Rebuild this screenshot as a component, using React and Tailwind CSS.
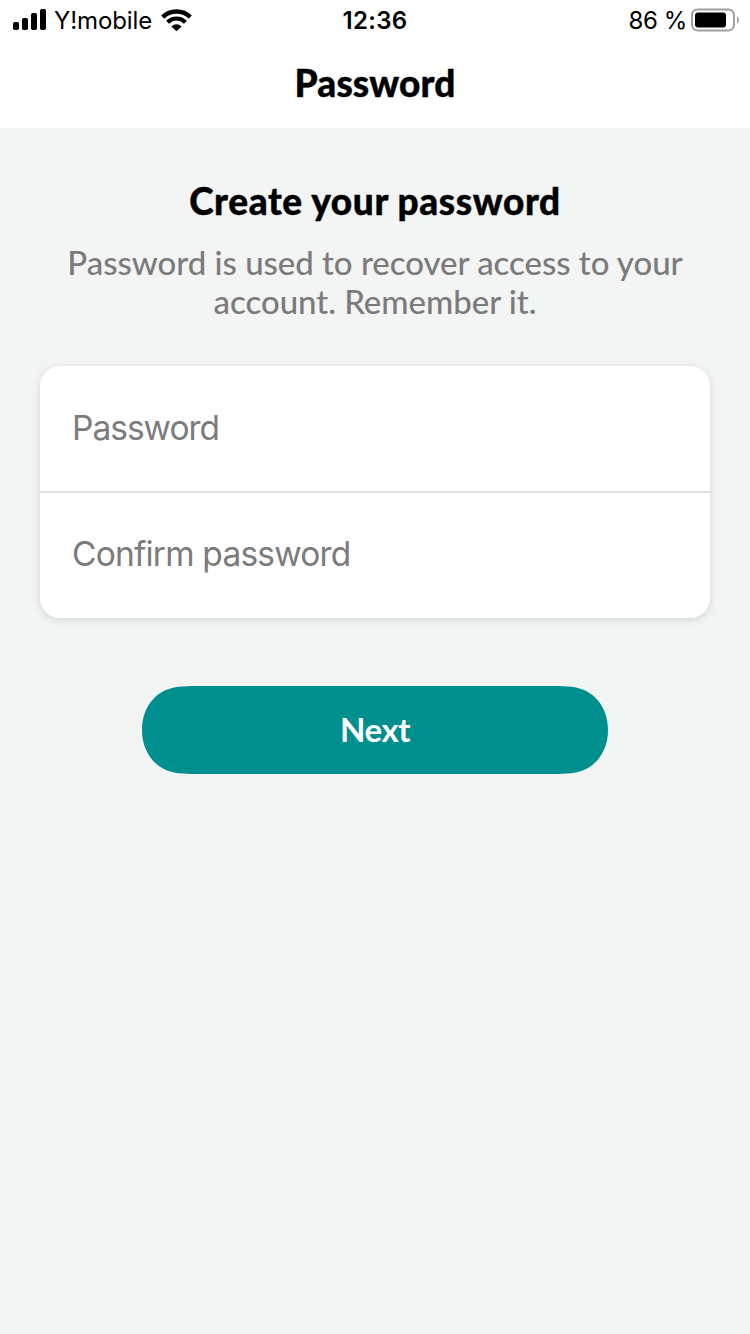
function StatusBar() {
  return (
    <div className="relative flex h-10 items-center justify-between pl-[13px] pr-[11px] font-['Inter',sans-serif] text-black">
      <div className="flex items-center">
        <svg className="block h-[22px] w-[34px]" viewBox="0 0 34 22" fill="#000">
          <rect x="0" y="13" width="6" height="8" rx="1.8" />
          <rect x="9" y="9" width="6" height="12" rx="1.8" />
          <rect x="18" y="4" width="6" height="17" rx="1.8" />
          <rect x="27" y="0" width="6" height="21" rx="1.8" />
        </svg>
        <span className="ml-[7px] w-[99px] whitespace-nowrap pt-[2px] text-[24px] leading-[40px] tracking-[-0.1px]">Y!mobile</span>
        <svg className="ml-[8px] block h-[23px] w-[31px]" viewBox="0 0 31 23" fill="none" stroke="#000">
          <path d="M1.7 8.1 A19.8 19.8 0 0 1 29.3 8.1" strokeWidth="4.4" />
          <path d="M6.600 13.2 A12.6 12.600 0 0 1 24.4 13.2" strokeWidth="4.2" />
          <path d="M10.400 17.4 A7.2 7.2 0 0 1 20.600 17.4 L15.5 22.300 Z" fill="#000" stroke="none" />
        </svg>
      </div>
      <span className="absolute inset-x-0 pt-[2px] text-center text-[24px] font-semibold leading-[40px] tracking-[0.3px]">12:36</span>
      <div className="flex items-center">
        <span className="whitespace-nowrap pt-[2px] text-[24px] leading-[40px] tracking-[-0.4px]">86 %</span>
        <svg className="ml-[4px] block h-[24px] w-[48px]" viewBox="0 0 48 24">
          <rect x="1" y="1.5" width="42" height="21" rx="5.5" fill="none" stroke="#a0a0a0" strokeWidth="2" />
          <rect x="4" y="4.5" width="31" height="15" rx="3" fill="#000" />
          <path d="M46 8 Q48 9.5 48 12 Q48 14.500 46 16 Z" fill="#a0a0a0" />
        </svg>
      </div>
    </div>
  );
}

export default function App() {
  return (
    <div className="min-h-[1334px] w-[750px] bg-[#f3f5f4] font-['Lato',sans-serif]">
      <header className="h-32 bg-white">
        <StatusBar />
        <h1 className="pt-[20px] text-center text-[37px] font-black leading-[46px] tracking-[0.1px] text-black [-webkit-text-stroke:0.4px_#000]">Password</h1>
      </header>
      <main className="flex flex-col items-center pt-[49px]">
        <h2 className="whitespace-nowrap text-[37px] font-black leading-[48px] tracking-[0.6px] text-black [-webkit-text-stroke:0.4px_#000]">Create your password</h2>
        <p className="mt-[18px] whitespace-nowrap text-center text-[33px] font-medium leading-[39px] tracking-[-0.04px] text-[#7b7b7b]">
          Password is used to recover access to your
          <br />
          account. Remember it.
        </p>
        <div className="mt-[45px] h-[252px] w-[670px] overflow-hidden rounded-[20px] bg-white font-['Inter',sans-serif] shadow-[0_2px_8px_rgba(0,40,50,0.15)]">
          <input
            type="password"
            placeholder="Password"
            className="block h-[125px] w-full px-8 pb-[1px] text-[33.5px] tracking-[-1px] outline-none placeholder:text-[#7b7b7b] placeholder:opacity-100"
          />
          <input
            type="password"
            placeholder="Confirm password"
            className="block h-[127px] w-full border-t-2 border-[#e0e0e0] px-8 pb-[3px] text-[33.5px] tracking-[-0.8px] outline-none placeholder:text-[#7b7b7b] placeholder:opacity-100"
          />
        </div>
        <button className="mt-[68px] h-[88px] w-[466px] bg-[#008f8f] pb-[2px] text-[33px] font-bold leading-[86px] tracking-[-0.4px] text-white [clip-path:path('M68_0H398C416_0_428_0_436_2C453_6_466_22_466_44C466_66_453_82_436_86C428_88_416_88_398_88H68C50_88_38_88_30_86C13_82_0_66_0_44C0_22_13_6_30_2C38_0_50_0_68_0Z')]">
          Next
        </button>
      </main>
    </div>
  );
}
